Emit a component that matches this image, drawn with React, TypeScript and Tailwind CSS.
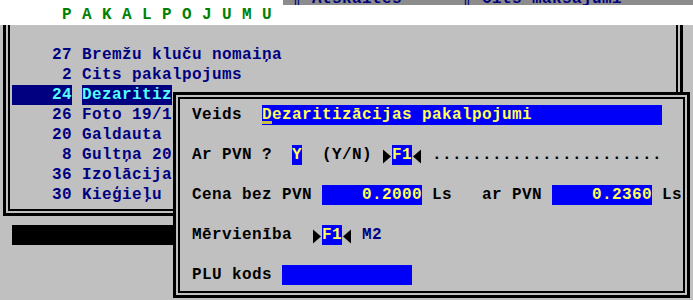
import React from "react";

function Tri({ dir }: { dir: "r" | "l" }) {
  return (
    <svg width="10" height="20" viewBox="0 0 10 20" className="inline-block align-top">
      {dir === "r" ? (
        <polygon points="1,4.5 9,11.5 1,18.5" fill="#000000" />
      ) : (
        <polygon points="9,4.5 1,11.5 9,18.5" fill="#000000" />
      )}
    </svg>
  );
}

function Fld({ children }: { children: React.ReactNode }) {
  return <span className="inline-block h-5 bg-[#0000f8] align-top text-[#ffff55]">{children}</span>;
}

const listRows: { num: string; name: string; sel?: boolean }[] = [
  { num: "    27", name: "Bremžu kluču nomaiņa" },
  { num: "     2", name: "Cits pakalpojums" },
  { num: "    24", name: "Dezaritiz", sel: true },
  { num: "    26", name: "Foto 19/1" },
  { num: "    20", name: "Galdauta" },
  { num: "     8", name: "Gultņa 20" },
  { num: "    36", name: "Izolācija" },
  { num: "    30", name: "Kieģieļu" },
];

export default function App() {
  return (
    <div className="relative h-[300px] w-[693px] overflow-hidden bg-[#c0c0c0] font-['Liberation_Mono','DejaVu_Sans_Mono',monospace] text-[16px] font-bold leading-5 tracking-[0.4px]">
      {/* top menu strip (mostly off-screen) */}
      <div className="flex h-[5px]">
        <div className="w-[283px] bg-white" />
        <div className="flex-1 overflow-hidden bg-[#8c8c8c] text-[#000080]">
          <div className="-mt-[11px] h-5 whitespace-pre pl-[9px]">{"║ Atskaites      ║ Cits maksājumi"}</div>
        </div>
      </div>

      {/* title band */}
      <div className="h-5 whitespace-pre bg-white pl-[62px] text-[#008000]">P A K A L P O J U M U</div>

      {/* list panel */}
      <div className="ml-[3px] w-[680px] border-x-[3px] border-b-[3px] border-black">
        <div className="mx-[2px] mb-[2px] border-x-2 border-b-2 border-black pb-[4px] pl-[2px] pt-5">
          {listRows.map((r) =>
            r.sel ? (
              <div key={r.num} className="flex h-5 whitespace-pre text-[#55ffff]">
                <span className="inline-block h-5 bg-[#000080]">{r.num}</span>
                <span className="inline-block h-5"> </span>
                <span className="inline-block h-5 bg-[#000080]">{r.name}</span>
              </div>
            ) : (
              <div key={r.num} className="h-5 whitespace-pre text-[#000080]">
                {r.num} {r.name}
              </div>
            )
          )}
        </div>
      </div>

      {/* black status bar */}
      <div className="ml-[12px] mt-[9px] h-5 w-[400px] bg-black" />

      {/* dialog window */}
      <div className="absolute left-[173px] top-[92px] h-[206px] w-[517px] border-[3px] border-black bg-[#c0c0c0]">
        <div className="m-[2px] h-[196px] border-2 border-black pl-[12px] pt-[6px] text-black">
          <div className="flex flex-col gap-5 whitespace-pre">
            <div className="h-5">
              {"Veids  "}
              <Fld>
                <span className="relative inline-block">
                  D
                  <span className="absolute bottom-[1px] left-0 h-[3px] w-[10px] bg-[#c8c040]" />
                </span>
                {"ezaritizācijas pakalpojumi             "}
              </Fld>
            </div>
            <div className="h-5">
              {"Ar PVN ?  "}
              <Fld>Y</Fld>
              {"  (Y/N) "}
              <Tri dir="r" />
              <Fld>F1</Fld>
              <Tri dir="l" />
              {" ......................."}
            </div>
            <div className="h-5">
              {"Cena bez PVN "}
              <Fld>{"    0.2000"}</Fld>
              {" Ls   ar PVN "}
              <Fld>{"    0.2360"}</Fld>
              {" Ls"}
            </div>
            <div className="h-5">
              {"Mērvienība  "}
              <Tri dir="r" />
              <Fld>F1</Fld>
              <Tri dir="l" />
              <span className="text-[#000080]">{" M2"}</span>
            </div>
            <div className="h-5">
              {"PLU kods "}
              <Fld>{"             "}</Fld>
            </div>
          </div>
        </div>
      </div>
    </div>
  );
}
